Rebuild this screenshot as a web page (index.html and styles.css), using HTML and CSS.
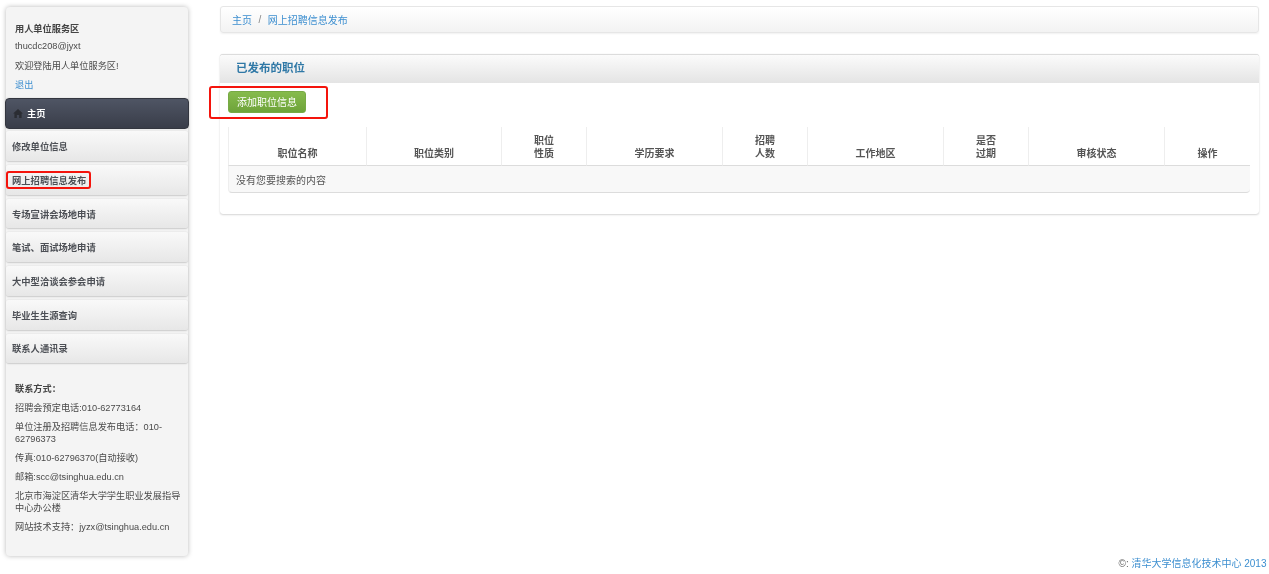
FILE: index.html
```html
<!DOCTYPE html>
<html lang="zh-CN">
<head>
<meta charset="utf-8">
<title>网上招聘信息发布</title>
<link rel="stylesheet" href="styles.css">
</head>
<body>
<div class="page">
  <aside class="sidebar">
    <div class="user">
      <p class="strong l1">用人单位服务区</p>
      <p class="l2">thucdc208@jyxt</p>
      <p class="l3">欢迎登陆用人单位服务区!</p>
      <p class="l4"><a href="#">退出</a></p>
    </div>
    <nav class="nav">
      <a class="nav-item active" href="#">
        <svg class="home" viewBox="0 0 12 11" width="10" height="9"><path d="M6 0 0 5.5h1.6V11h3V7.4h2.8V11h3V5.5H12z"/></svg>主页
      </a>
      <a class="nav-item" href="#">修改单位信息</a>
      <a class="nav-item marked-nav" href="#">网上招聘信息发布<span class="mark mark-nav"></span></a>
      <a class="nav-item" href="#">专场宣讲会场地申请</a>
      <a class="nav-item" href="#">笔试、面试场地申请</a>
      <a class="nav-item" href="#">大中型洽谈会参会申请</a>
      <a class="nav-item" href="#">毕业生生源查询</a>
      <a class="nav-item" href="#">联系人通讯录</a>
    </nav>
    <div class="contact">
      <p class="strong">联系方式：</p>
      <p>招聘会预定电话:010-62773164</p>
      <p>单位注册及招聘信息发布电话：010-62796373</p>
      <p>传真:010-62796370(自动接收)</p>
      <p>邮箱:scc@tsinghua.edu.cn</p>
      <p>北京市海淀区清华大学学生职业发展指导中心办公楼</p>
      <p>网站技术支持：jyzx@tsinghua.edu.cn</p>
    </div>
  </aside>
  <main class="main">
    <div class="crumbs"><a href="#">主页</a><span class="sep">/</span><a href="#">网上招聘信息发布</a></div>
    <section class="panel">
      <h2 class="panel-head">已发布的职位</h2>
      <div class="panel-body">
        <div class="toolbar">
          <a class="btn" href="#">添加职位信息</a>
          <span class="mark mark-btn"></span>
        </div>
        <table class="grid">
          <colgroup>
            <col class="c-a"><col class="c-a2"><col class="c-b"><col class="c-d"><col class="c-b"><col class="c-d"><col class="c-b"><col class="c-d"><col class="c-c">
          </colgroup>
          <thead>
            <tr>
              <th>职位名称</th><th>职位类别</th><th>职位<br>性质</th><th>学历要求</th><th>招聘<br>人数</th><th>工作地区</th><th>是否<br>过期</th><th>审核状态</th><th>操作</th>
            </tr>
          </thead>
          <tbody>
            <tr><td colspan="9">没有您要搜索的内容</td></tr>
          </tbody>
        </table>
      </div>
    </section>
    <footer class="foot">©: <a href="#">清华大学信息化技术中心 2013</a></footer>
  </main>
</div>
</body>
</html>
```
FILE: styles.css
```css
* { box-sizing: border-box; }
html, body { margin: 0; height: 574px; overflow: hidden; background: #fff; }
body {
  font-family: "Liberation Sans", "Noto Sans CJK SC", sans-serif;
  font-size: 9.2px;
  color: #4a4a4a;
}
a { color: #3d8fd0; text-decoration: none; }
p { margin: 0; }
.page { display: flex; height: 574px; padding: 6px 10.5px 0 6px; filter: blur(0.3px); }

.sidebar {
  width: 182px;
  height: 549px;
  margin-top: 1px;
  flex: none;
  background: #f4f4f4;
  border-radius: 4px;
  box-shadow: 0 0 5px rgba(0,0,0,.28);
  display: flex;
  flex-direction: column;
}
.strong { font-weight: 700; color: #444; }
.user { height: 90.7px; padding: 16px 6px 0 9px; line-height: 13px; }
.l2 { margin-top: 4px; }
.l3 { margin-top: 7px; }
.l4 { margin-top: 6px; }

.nav { display: flex; flex-direction: column; gap: 3px; }
.nav-item {
  position: relative;
  display: flex;
  align-items: center;
  height: 30.7px;
  padding-left: 6px;
  font-size: 9.3px;
  font-weight: 700;
  color: #4c4f55;
  border-radius: 3px;
  background: linear-gradient(#f9f9f9, #e7e7e7);
  border-bottom: 1px solid #d2d2d2;
  box-shadow: 0 0 2px rgba(0,0,0,.12);
}
.nav-item.active {
  height: 31.5px;
  margin: 0 -1px -0.8px;
  padding-left: 7px;
  color: #fff;
  background: linear-gradient(#4f5564, #393d49);
  border: 1px solid #33363f;
  border-radius: 4px;
}
.home { fill: #2b2d33; margin-right: 4px; }

.contact { padding: 19.3px 6px 0 9px; line-height: 11.8px; }
.contact p { margin-bottom: 7.4px; }

.mark {
  position: absolute;
  border: 2px solid #f4140c;
  border-radius: 3px;
  pointer-events: none;
}
.mark-nav { left: 0; top: 6px; width: 85px; height: 18px; }
.mark-btn { left: -19px; top: -5px; width: 119px; height: 33px; }

.main { flex: 1; min-width: 0; margin-left: 32px; height: 564px; display: flex; flex-direction: column; }
.crumbs {
  height: 27px;
  flex: none;
  display: flex;
  align-items: center;
  padding-left: 11px;
  font-size: 10px;
  border-radius: 3px;
  border: 1px solid #e6e6e6;
  background: linear-gradient(#fff, #f3f3f3);
  box-shadow: 0 1px 2px rgba(0,0,0,.06);
}
.sep { color: #888; margin: 0 6.5px; }

.panel {
  margin-top: 21px;
  height: 160px;
  flex: none;
  border-radius: 3px;
  background: #fff;
  border-top: 1px solid #dcdcdc;
  box-shadow: 0 1px 2px rgba(0,0,0,.16), 0 0 1px rgba(0,0,0,.14);
}
.panel-head {
  margin: 0;
  height: 28px;
  padding: 5px 0 0 16px;
  font-size: 11.5px;
  line-height: 16px;
  font-weight: 700;
  color: #2f78a6;
  background: linear-gradient(#fbfbfb, #e4e4e4);
  border-radius: 3px 3px 0 0;
}
.panel-body { padding: 8px 0 0 8px; }
.toolbar { position: relative; height: 22px; }
.btn {
  display: block;
  width: 78px;
  height: 22px;
  line-height: 21px;
  text-align: center;
  font-size: 10px;
  color: #fff;
  background: linear-gradient(#86bb4c, #6ea33a);
  border-radius: 3px;
  border: 1px solid #77aa45;
}
.grid {
  margin-top: 14px;
  width: 1022px;
  table-layout: fixed;
  border-collapse: separate;
  border-spacing: 0;
  font-size: 10px;
  border-radius: 4px;
}
.c-a { width: 139px; }
.c-a2 { width: 135px; }
.c-b { width: 85px; }
.c-c { width: 85px; }
.c-d { width: 136px; }
th {
  height: 39px;
  padding: 0 0 5px;
  vertical-align: bottom;
  text-align: center;
  line-height: 13px;
  font-weight: 700;
  color: #555;
  border-right: 1px solid #eee;
  border-bottom: 1px solid #dcdcdc;
}
th:first-child { border-left: 1px solid #eee; }
th:last-child { border-right: 0; }
td {
  height: 27px;
  padding: 0 0 0 7px;
  color: #555;
  background: #f8f8f8;
  border-left: 1px solid #eee;
  border-bottom: 1px solid #dcdcdc;
  border-radius: 0 0 4px 4px;
}
.foot {
  margin-top: auto;
  margin-right: -8px;
  align-self: flex-end;
  line-height: 12px;
  font-size: 10px;
  color: #666;
}
```
